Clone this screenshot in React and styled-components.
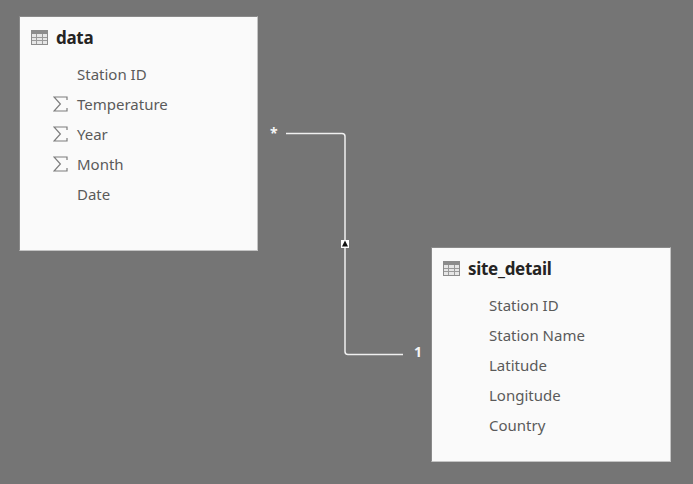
import React from 'react';
import styled, { createGlobalStyle } from 'styled-components';

const GlobalStyle = createGlobalStyle`
  html, body {
    margin: 0;
    padding: 0;
    background: #757575;
  }
`;

const Canvas = styled.div`
  position: relative;
  width: 693px;
  height: 484px;
  overflow: hidden;
  background: #757575;
  font-family: "Noto Sans", "Open Sans", sans-serif;
`;

const TableCard = styled.div`
  position: absolute;
  left: ${props => props.x}px;
  top: ${props => props.y}px;
  width: ${props => props.w}px;
  height: ${props => props.h}px;
  box-sizing: border-box;
  background: #fafafa;
  border: 1px solid #c4c4c4;
  border-top-color: #8a8a8a;
  border-left-color: #8a8a8a;
  padding: 8px 0 0 11px;
`;

const CardHeader = styled.div`
  display: flex;
  align-items: center;
  gap: 8px;
  height: 24px;
  margin-bottom: 10px;
`;

const CardTitle = styled.div`
  font-size: 17px;
  font-weight: 700;
  letter-spacing: -0.3px;
  color: #252423;
`;

const FieldList = styled.div`
  display: flex;
  flex-direction: column;
`;

const FieldRow = styled.div`
  display: flex;
  align-items: center;
  height: 30px;
`;

const IconSlot = styled.div`
  width: 24px;
  margin-left: 22px;
  display: flex;
  align-items: center;
`;

const FieldName = styled.div`
  font-size: 15px;
  color: #5a5a5a;
`;

const Connector = styled.svg`
  position: absolute;
  left: 0;
  top: 0;
`;

const Cardinality = styled.div`
  position: absolute;
  left: ${props => props.x}px;
  top: ${props => props.y}px;
  font-size: 14px;
  font-weight: 700;
  line-height: 16px;
  color: #f4f4f4;
`;

const TableIcon = () => (
  <svg width="17" height="15" viewBox="0 0 17 15">
    <rect x="0" y="0" width="17" height="15" fill="#8c8c8c" />
    <rect x="1" y="4" width="15" height="10" fill="#e6e6e6" />
    <path d="M5.5 4v10M11.5 4v10M1 7.5h15M1 10.5h15" stroke="#9a9a9a" strokeWidth="1" fill="none" />
  </svg>
);

const SigmaIcon = () => (
  <svg width="15" height="16" viewBox="0 0 15 16">
    <path d="M14 4V1H1l6.4 7L1 15h13v-3" stroke="#7c7c7c" strokeWidth="1.2" fill="none" />
  </svg>
);

const tables = [
  {
    name: 'data',
    x: 19,
    y: 16,
    w: 239,
    h: 235,
    fields: [
      { name: 'Station ID' },
      { name: 'Temperature', sum: true },
      { name: 'Year', sum: true },
      { name: 'Month', sum: true },
      { name: 'Date' },
    ],
  },
  {
    name: 'site_detail',
    x: 431,
    y: 247,
    w: 240,
    h: 215,
    fields: [
      { name: 'Station ID' },
      { name: 'Station Name' },
      { name: 'Latitude' },
      { name: 'Longitude' },
      { name: 'Country' },
    ],
  },
];

const App = () => (
  <Canvas>
    <GlobalStyle />
    {tables.map(table => (
      <TableCard key={table.name} x={table.x} y={table.y} w={table.w} h={table.h}>
        <CardHeader>
          <TableIcon />
          <CardTitle>{table.name}</CardTitle>
        </CardHeader>
        <FieldList>
          {table.fields.map(field => (
            <FieldRow key={field.name}>
              <IconSlot>{field.sum && <SigmaIcon />}</IconSlot>
              <FieldName>{field.name}</FieldName>
            </FieldRow>
          ))}
        </FieldList>
      </TableCard>
    ))}
    <Connector width="693" height="484" viewBox="0 0 693 484">
      <path
        d="M286 133.5H342a3 3 0 0 1 3 3V351.5a3 3 0 0 0 3 3H403"
        stroke="#f0f0f0"
        strokeWidth="1.5"
        fill="none"
      />
      <rect x="341" y="240" width="8" height="8" fill="#fff" />
      <path d="M345 240.5l3 6h-6z" fill="#111" />
    </Connector>
    <Cardinality x={270} y={125}>*</Cardinality>
    <Cardinality x={414} y={344}>1</Cardinality>
  </Canvas>
);

export default App;
